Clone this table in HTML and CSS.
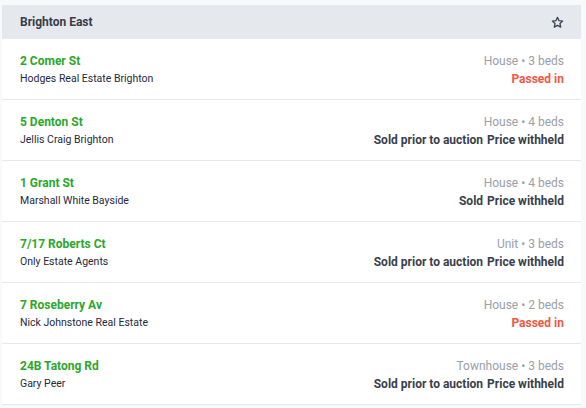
FILE: index.html
```html
<!DOCTYPE html>
<html>
<head>
<meta charset="utf-8">
<link rel="stylesheet" href="styles.css">
</head>
<body>
<div class="page">
  <section class="card">
    <header class="card-head">
      <span class="suburb">Brighton East</span>
      <svg class="star" width="13" height="13" viewBox="0 0 24 24" fill="none" stroke="#3b4250" stroke-width="2.4" stroke-linejoin="round"><path d="M12 2.5l2.9 6.1 6.6.8-4.9 4.6 1.3 6.6L12 17.3l-5.9 3.3 1.3-6.6-4.9-4.6 6.6-.8z"/></svg>
    </header>
    <ul class="list">
      <li class="row">
        <div class="left"><div class="addr">2 Comer St</div><div class="agent">Hodges Real Estate Brighton</div></div>
        <div class="right"><div class="meta">House • 3 beds</div><div class="result passed">Passed in</div></div>
      </li>
      <li class="row">
        <div class="left"><div class="addr">5 Denton St</div><div class="agent">Jellis Craig Brighton</div></div>
        <div class="right"><div class="meta">House • 4 beds</div><div class="result"><span>Sold prior to auction</span><span class="price">Price withheld</span></div></div>
      </li>
      <li class="row">
        <div class="left"><div class="addr">1 Grant St</div><div class="agent">Marshall White Bayside</div></div>
        <div class="right"><div class="meta">House • 4 beds</div><div class="result"><span>Sold</span><span class="price">Price withheld</span></div></div>
      </li>
      <li class="row">
        <div class="left"><div class="addr">7/17 Roberts Ct</div><div class="agent">Only Estate Agents</div></div>
        <div class="right"><div class="meta">Unit • 3 beds</div><div class="result"><span>Sold prior to auction</span><span class="price">Price withheld</span></div></div>
      </li>
      <li class="row">
        <div class="left"><div class="addr">7 Roseberry Av</div><div class="agent">Nick Johnstone Real Estate</div></div>
        <div class="right"><div class="meta">House • 2 beds</div><div class="result passed">Passed in</div></div>
      </li>
      <li class="row">
        <div class="left"><div class="addr">24B Tatong Rd</div><div class="agent">Gary Peer</div></div>
        <div class="right"><div class="meta">Townhouse • 3 beds</div><div class="result"><span>Sold prior to auction</span><span class="price">Price withheld</span></div></div>
      </li>
    </ul>
  </section>
</div>
</body>
</html>
```

FILE: styles.css
```css
html, body {
  margin: 0;
  padding: 0;
  background: #f8f9fb;
}
body {
  font-family: Roboto, "Liberation Sans", Arial, sans-serif;
  color: #1f2937;
}
.page {
  padding: 5px 5px 0 2px;
}
.card {
  background: #ffffff;
}
.card-head {
  height: 34px;
  background: #e5e8ec;
  display: flex;
  align-items: center;
  justify-content: space-between;
  padding: 0 17px 0 18px;
}
.suburb {
  font-size: 12px;
  font-weight: 700;
  color: #363c48;
}
.star {
  display: block;
}
.list {
  list-style: none;
  margin: 0;
  padding: 0;
}
.row {
  display: flex;
  justify-content: space-between;
  padding: 13px 17px 11px 18px;
  border-bottom: 1px solid #e6e8eb;
  line-height: 18px;
}
.addr {
  font-size: 12px;
  font-weight: 700;
  color: #2aa82a;
}
.agent {
  font-size: 10.5px;
  color: #1f2a3c;
}
.right {
  text-align: right;
}
.meta {
  font-size: 12px;
  color: #9aa0a8;
}
.result {
  font-size: 12px;
  font-weight: 700;
  color: #3a404b;
}
.result.passed {
  color: #f4573f;
}
.price {
  margin-left: 4px;
}
```
